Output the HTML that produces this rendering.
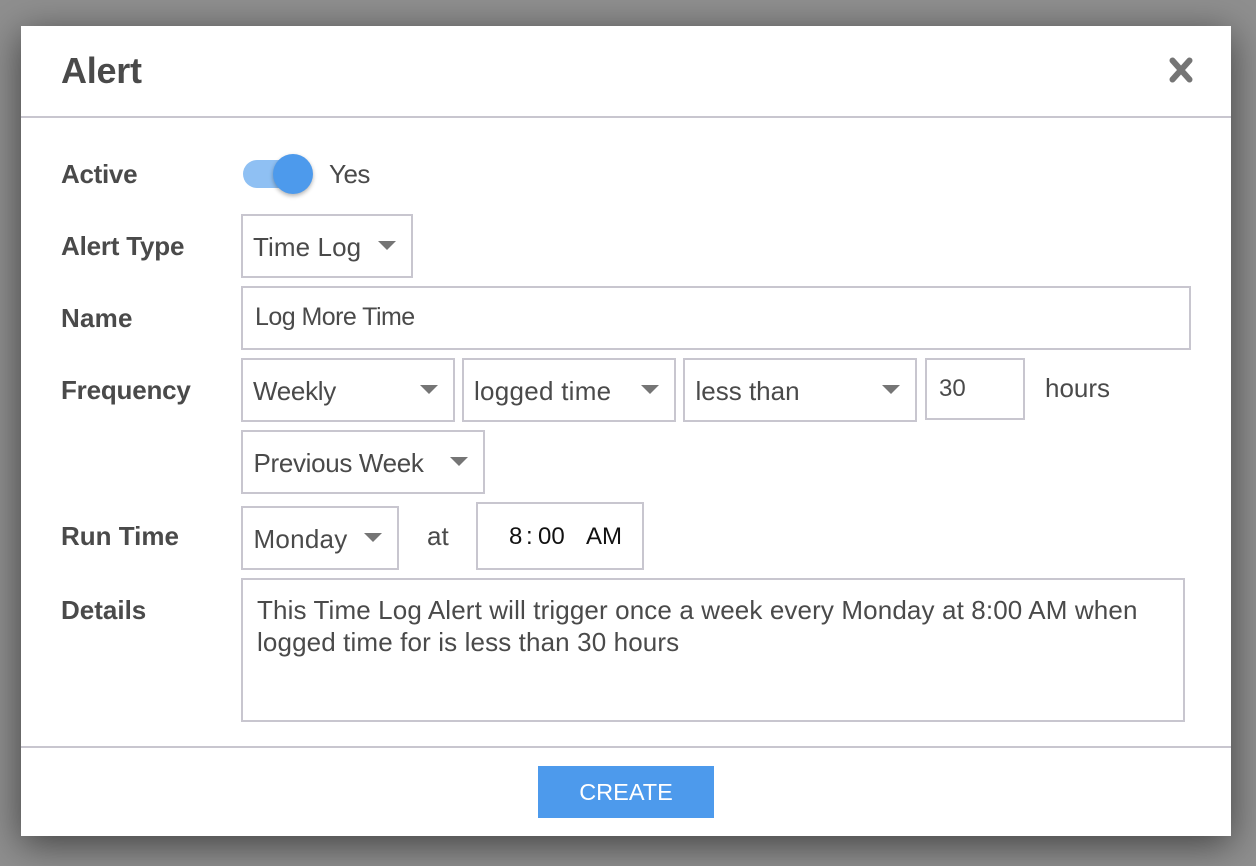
<!DOCTYPE html>
<html><head><meta charset="utf-8"><style>
html,body{margin:0;padding:0;width:1256px;height:866px;overflow:hidden;background:#8f8f8f;font-family:"Liberation Sans",sans-serif;color:#4a4a4a}
#m{position:absolute;left:21px;top:26px;width:1210px;height:810px;background:#fff;box-shadow:0 8px 36px rgba(0,0,0,.55)}
.a{position:absolute;white-space:nowrap}
.t{position:absolute;white-space:nowrap;line-height:30px;font-size:26px}
.l{font-weight:bold;font-size:26px;left:61px}
.b{position:absolute;box-sizing:border-box;border:2px solid #c8c6cf;background:#fff}
.h{position:absolute;left:21px;width:1210px;height:2px;background:#c8c6cf}
.c{position:absolute;width:0;height:0;border-left:9.5px solid transparent;border-right:9.5px solid transparent;border-top:9px solid #757575}
</style></head><body>
<div id="m"></div>
<div class="t" style="left:61px;top:51px;font-size:36px;line-height:40px;font-weight:bold;letter-spacing:-.25px">Alert</div>
<svg class="a" style="left:1168px;top:56px" width="28" height="28" viewBox="0 0 28 28"><path d="M4.5 4.5L21.5 23.5M21.5 4.5L4.5 23.5" stroke="#757575" stroke-width="6" stroke-linecap="round" fill="none"/></svg>
<div class="h" style="top:116px"></div>

<div class="t l" style="top:159px;letter-spacing:-.3px">Active</div>
<div class="a" style="left:243px;top:160px;width:62px;height:28px;border-radius:14px;background:#8fc0f3"></div>
<div class="a" style="left:273px;top:154px;width:40px;height:40px;border-radius:50%;background:#4d9aec;box-shadow:0 2px 4px rgba(0,0,0,.3)"></div>
<div class="t" style="left:329px;top:159px;letter-spacing:-.5px">Yes</div>

<div class="t l" style="top:231px;letter-spacing:-.2px">Alert Type</div>
<div class="b" style="left:241px;top:214px;width:172px;height:64px"></div>
<div class="t" style="left:253px;top:232px;letter-spacing:.1px">Time Log</div>
<div class="c" style="left:378px;top:241px"></div>

<div class="t l" style="top:303px;letter-spacing:.2px">Name</div>
<div class="b" style="left:241px;top:286px;width:950px;height:64px"></div>
<div class="t" style="left:255px;top:302px;font-size:25px;letter-spacing:-.55px">Log More Time</div>

<div class="t l" style="top:375px;letter-spacing:-.2px">Frequency</div>
<div class="b" style="left:241px;top:358px;width:214px;height:64px"></div>
<div class="t" style="left:253px;top:376px;letter-spacing:-.3px">Weekly</div>
<div class="c" style="left:420px;top:385px"></div>
<div class="b" style="left:462px;top:358px;width:214px;height:64px"></div>
<div class="t" style="left:474px;top:376px;letter-spacing:.27px">logged time</div>
<div class="c" style="left:641px;top:385px"></div>
<div class="b" style="left:683px;top:358px;width:234px;height:64px"></div>
<div class="t" style="left:695.5px;top:376px">less than</div>
<div class="c" style="left:882px;top:385px"></div>
<div class="b" style="left:925px;top:358px;width:100px;height:62px"></div>
<div class="t" style="left:939px;top:374px;font-size:24px">30</div>
<div class="t" style="left:1045px;top:373px">hours</div>

<div class="b" style="left:241px;top:430px;width:244px;height:64px"></div>
<div class="t" style="left:253.5px;top:448px;letter-spacing:-.33px">Previous Week</div>
<div class="c" style="left:450px;top:457px"></div>

<div class="t l" style="top:521px">Run Time</div>
<div class="b" style="left:241px;top:506px;width:158px;height:64px"></div>
<div class="t" style="left:253.5px;top:524px;letter-spacing:.25px">Monday</div>
<div class="c" style="left:364px;top:533px"></div>
<div class="t" style="left:427px;top:521px">at</div>
<div class="b" style="left:476px;top:502px;width:168px;height:68px"></div>
<div class="t" style="left:509px;top:522px;font-size:24px;color:#111">8</div>
<div class="t" style="left:526px;top:522px;font-size:24px;color:#111">:</div>
<div class="t" style="left:538px;top:522px;font-size:24px;color:#111">00</div>
<div class="t" style="left:586px;top:522px;font-size:24px;color:#111">AM</div>

<div class="t l" style="top:595px">Details</div>
<div class="b" style="left:241px;top:578px;width:944px;height:144px"></div>
<div class="t" style="left:257px;top:594px;line-height:32px;letter-spacing:.125px">This Time Log Alert will trigger once a week every Monday at 8:00 AM when<br>logged time for is less than 30 hours</div>

<div class="h" style="top:746px"></div>
<div class="a" style="left:538px;top:766px;width:176px;height:52px;background:#4d9aec;color:#fff;font-size:23.5px;line-height:53px;text-align:center">CREATE</div>
</body></html>
